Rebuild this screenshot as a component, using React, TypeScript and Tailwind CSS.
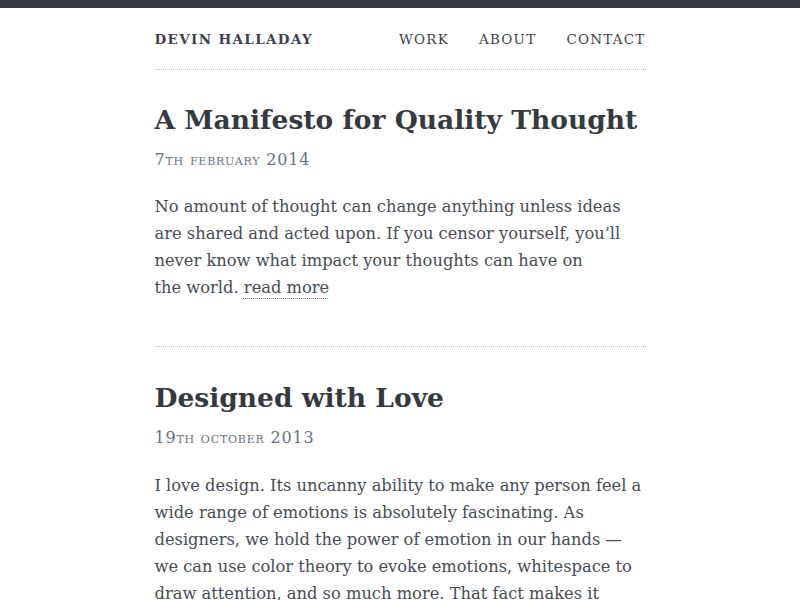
const posts = [
  {
    title: "A Manifesto for Quality Thought",
    date: "7th february 2014",
    body: "No amount of thought can change anything unless ideas are shared and acted upon. If you censor yourself, you\u2019ll never know what impact your thoughts can have on the\u00a0world.",
    more: true,
  },
  {
    title: "Designed with Love",
    date: "19th october 2013",
    body: "I love design. Its uncanny ability to make any person feel a wide range of emotions is absolutely fascinating. As designers, we hold the power of emotion in our hands \u2014 we can use color theory to evoke emotions, whitespace to draw attention, and so much more. That fact makes it",
    more: false,
  },
]

export default function App() {
  return (
    <div className="min-h-screen bg-white text-[#3a4047] font-['DejaVu_Serif',serif]">
      <div className="h-2 bg-[#343a40]" />
      <div className="max-w-[491px] mx-auto">
        {/* Header */}
        <header className="flex items-center justify-between h-[62px] pt-[2px] border-b border-dotted border-[#b8bcc0]">
          <a className="text-[13.5px] font-bold tracking-[0.1em] text-[#3b4249]">DEVIN HALLADAY</a>
          <nav className="flex gap-[30px] text-[13.5px] tracking-[0.09em] text-[#3b4249]">
            <a>WORK</a>
            <a>ABOUT</a>
            <a>CONTACT</a>
          </nav>
        </header>

        {posts.map((p, i) => (
          <article key={i} className={i === 0 ? "pt-[32px] pb-[45px] border-b border-dotted border-[#b8bcc0]" : "pt-[33px]"}>
            <h2 className="text-[26.5px] leading-[36px] font-bold text-[#343a40]">{p.title}</h2>
            <div className="mt-[10px] text-[16px] leading-[24px] text-[#66727f] [font-variant:small-caps] tracking-[0.05em]">{p.date}</div>
            <p className={(i === 0 ? "mt-[21px]" : "mt-[22px]") + " text-[16.3px] leading-[27px] text-[#474d55]"}>
              {p.body}
              {p.more && (
                <>
                  {" "}
                  <a className="underline decoration-dotted decoration-1 decoration-[#6b7178] underline-offset-[5px]">read more</a>
                </>
              )}
            </p>
          </article>
        ))}
      </div>
    </div>
  )
}
